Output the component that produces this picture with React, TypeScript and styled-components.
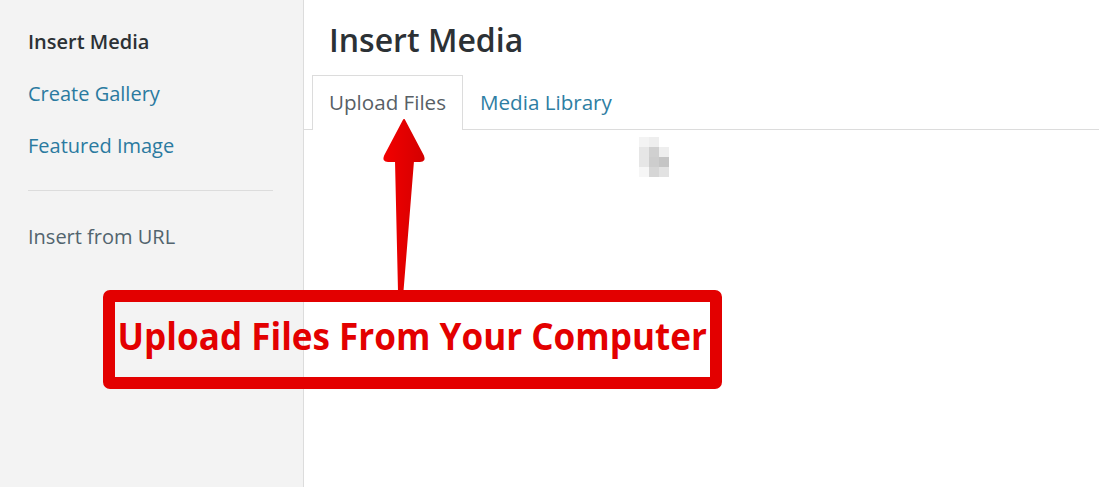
import React from "react";
import styled, { createGlobalStyle } from "styled-components";

const GlobalStyle = createGlobalStyle`
  html, body {
    margin: 0;
    padding: 0;
    background: #fff;
  }
  body {
    font-family: "Open Sans", "Noto Sans", "Liberation Sans", sans-serif;
    -webkit-font-smoothing: antialiased;
  }
`;

/* Moldura do modal */
const Frame = styled.div`
  position: relative;
  display: flex;
  width: 100%;
  height: 487px;
  overflow: hidden;
`;

/* Menu lateral */
const Sidebar = styled.nav`
  width: 304px;
  flex-shrink: 0;
  background: #f3f3f3;
  border-right: 1px solid #dcdcdc;
  padding-top: 16px;
  box-sizing: border-box;
`;

const MenuItem = styled.a<{ $active?: boolean; $muted?: boolean }>`
  display: block;
  padding: 13px 28px;
  font-size: 20px;
  line-height: 26px;
  text-decoration: none;
  font-weight: ${(p) => (p.$active ? 600 : 400)};
  color: ${(p) => (p.$active ? "#2c3135" : p.$muted ? "#52646e" : "#2a7aa0")};
`;

const Separator = styled.hr`
  border: 0;
  border-top: 1px solid #dcdcdc;
  margin: 18px 30px 20px 28px;
`;

/* Área principal */
const Main = styled.main`
  flex: 1;
  background: #fff;
  display: flex;
  flex-direction: column;
`;

const Title = styled.h1`
  margin: 0;
  padding: 20px 0 0 25px;
  font-size: 32px;
  line-height: 40px;
  font-weight: 600;
  color: #2c3135;
`;

const TabBar = styled.div`
  display: flex;
  margin-top: 15px;
  padding-left: 8px;
  border-bottom: 1px solid #dcdcdc;
`;

const Tab = styled.a<{ $active?: boolean }>`
  display: block;
  padding: 0 16px;
  height: 53px;
  line-height: 53px;
  font-size: 20.6px;
  text-decoration: none;
  border: 1px solid ${(p) => (p.$active ? "#dcdcdc" : "transparent")};
  border-bottom: 0;
  margin-bottom: -1px;
  background: ${(p) => (p.$active ? "#fff" : "transparent")};
  color: ${(p) => (p.$active ? "#585f66" : "#2e7ea3")};
  ${(p) => p.$active && "padding-bottom: 1px;"}
`;

const Content = styled.section`
  flex: 1;
  padding: 7px 0 0 335px;
`;

/* Anotação sobreposta (seta + caixa) */
const ArrowSvg = styled.svg`
  position: absolute;
  left: 378px;
  top: 114px;
  width: 52px;
  height: 180px;
  pointer-events: none;
`;

const Callout = styled.div`
  position: absolute;
  left: 103px;
  top: 290px;
  width: 619px;
  height: 99px;
  box-sizing: border-box;
  border: 12px solid #e30000;
  border-radius: 7px;
  display: flex;
  align-items: center;
  justify-content: center;
  padding-bottom: 10px;
`;

const CalloutText = styled.span`
  display: inline-block;
  font-family: "Open Sans", "Noto Sans", sans-serif;
  font-weight: 700;
  font-size: 38px;
  line-height: 44px;
  color: #e30000;
  white-space: nowrap;
  transform: scaleX(0.923);
`;

const pixels: [number, number, string][] = [
  [0, 0, "#f3f3f3"],
  [10, 0, "#eeeeee"],
  [0, 10, "#e6e6e6"],
  [10, 10, "#d0d0d0"],
  [20, 10, "#eeeeee"],
  [0, 20, "#e6e6e6"],
  [10, 20, "#cdcdcd"],
  [20, 20, "#c5c5c5"],
  [0, 30, "#f6f6f6"],
  [10, 30, "#d6d6d6"],
  [20, 30, "#e2e2e2"],
];

function LoadingPixels() {
  return (
    <svg width="30" height="40" viewBox="0 0 30 40">
      {pixels.map(([x, y, c]) => (
        <rect key={`${x}-${y}`} x={x} y={y} width="10" height="10" fill={c} />
      ))}
    </svg>
  );
}

export default function App() {
  return (
    <>
      <GlobalStyle />
      <Frame>
        <Sidebar>
          <MenuItem $active>Insert Media</MenuItem>
          <MenuItem>Create Gallery</MenuItem>
          <MenuItem>Featured Image</MenuItem>
          <Separator />
          <MenuItem $muted>Insert from URL</MenuItem>
        </Sidebar>
        <Main>
          <Title>Insert Media</Title>
          <TabBar>
            <Tab $active>Upload Files</Tab>
            <Tab>Media Library</Tab>
          </TabBar>
          <Content>
            <LoadingPixels />
          </Content>
        </Main>

        <ArrowSvg viewBox="378 114 52 180">
          <defs>
            <linearGradient id="arrowFill" x1="0" x2="1" y1="0" y2="0">
              <stop offset="0" stopColor="#f20000" />
              <stop offset="1" stopColor="#d40000" />
            </linearGradient>
          </defs>
          <path
            d="M404 120 L423 156 Q425 161 420 161 L413 161 L402.5 291 L399 291 L396 161 L388 161 Q383 161 385 156 Z"
            fill="url(#arrowFill)"
            stroke="url(#arrowFill)"
            strokeWidth="2"
            strokeLinejoin="round"
          />
        </ArrowSvg>

        <Callout>
          <CalloutText>Upload Files From Your Computer</CalloutText>
        </Callout>
      </Frame>
    </>
  );
}
